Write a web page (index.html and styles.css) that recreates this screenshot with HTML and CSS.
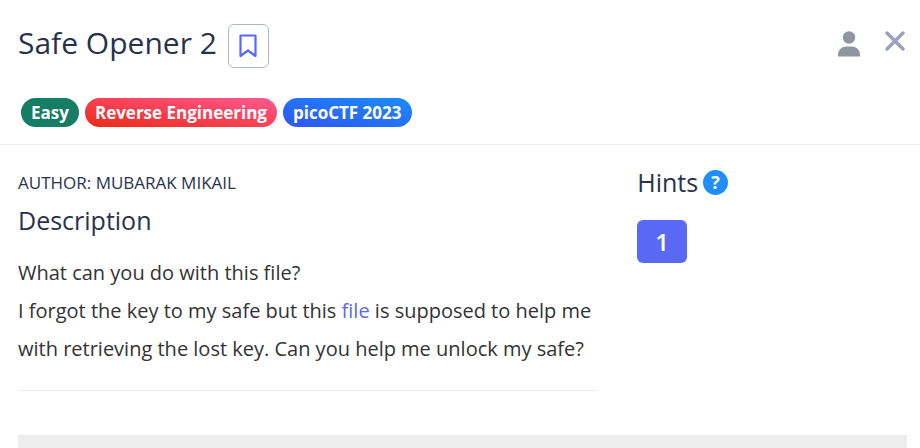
FILE: index.html
```html
<!DOCTYPE html>
<html lang="en">
<head>
  <meta charset="utf-8">
  <title>Safe Opener 2</title>
  <link rel="stylesheet" href="styles.css">
</head>
<body>
  <div class="modal-header">
    <div class="title-row">
      <h1 class="title">Safe Opener 2</h1>
      <button type="button" class="bookmark" aria-label="Bookmark">
        <svg width="18" height="24" viewBox="0 0 18 24">
          <path d="M1.5 1.5h15v20.5l-7.5-5.5-7.5 5.5z" fill="none" stroke="#5a69f5" stroke-width="2.2" stroke-linejoin="round"/>
        </svg>
      </button>
      <div class="actions">
        <button type="button" class="icon-button" aria-label="Profile">
          <svg width="22" height="26" viewBox="0 0 22 26">
            <circle cx="11" cy="6.5" r="6.2" fill="#9094a3"/>
            <path d="M0 25.5v-1.5c0-5.5 4-8.5 8.5-8.5h5c4.5 0 8.5 3 8.5 8.5v1.5z" fill="#9094a3"/>
          </svg>
        </button>
        <button type="button" class="icon-button" aria-label="Close">
          <svg width="20" height="20" viewBox="0 0 20 20">
            <path d="M2 2l16 16M18 2L2 18" fill="none" stroke="#98a1bf" stroke-width="3.4" stroke-linecap="round"/>
          </svg>
        </button>
      </div>
    </div>
    <div class="badges">
      <span class="badge easy">Easy</span>
      <span class="badge category">Reverse Engineering</span>
      <span class="badge event">picoCTF 2023</span>
    </div>
  </div>

  <div class="modal-body">
    <div class="columns">
      <div class="description">
        <p class="author">AUTHOR: MUBARAK MIKAIL</p>
        <h2 class="heading">Description</h2>
        <p class="text">What can you do with this file?</p>
        <p class="text">I forgot the key to my safe but this <a href="#">file</a> is supposed to help me with retrieving the lost key. Can you help me unlock my safe?</p>
      </div>
      <div class="hints">
        <div class="hints-title">
          <h2 class="heading">Hints</h2>
          <button type="button" class="help" aria-label="About hints">?</button>
        </div>
        <button type="button" class="hint">1</button>
      </div>
    </div>
    <div class="panel"></div>
  </div>
</body>
</html>
```

FILE: styles.css
```css
* {
  box-sizing: border-box;
}

body {
  display: flex;
  flex-direction: column;
  min-height: 100vh;
  margin: 0;
  background-color: #fff;
  color: #28324c;
  font-family: "Open Sans", "Noto Sans", sans-serif;
}

h1, h2, p {
  margin: 0;
  font-weight: 400;
}

button {
  padding: 0;
  border: none;
  background: none;
  font-family: inherit;
  cursor: pointer;
}

svg {
  display: block;
}

/* header */
.modal-header {
  padding: 24px 15px 17px 18px;
  border-bottom: 1px solid #ebedf0;
}

.title-row {
  display: flex;
  align-items: center;
  gap: 11px;
}

.title {
  font-size: 30px;
  line-height: 38px;
  padding-bottom: 6px;
}

.bookmark {
  display: flex;
  align-items: center;
  justify-content: center;
  width: 41px;
  height: 44px;
  border: 1px solid #b0b7c1;
  border-radius: 6px;
}

.actions {
  display: flex;
  align-items: flex-start;
  gap: 25px;
  margin-left: auto;
  padding-bottom: 4px;
}

.badges {
  display: flex;
  gap: 6px;
  margin-top: 30px;
  padding-left: 3px;
}

.badge {
  padding: 0 10px;
  border-radius: 15px;
  color: #fff;
  font-size: 17px;
  font-weight: 700;
  line-height: 29px;
}

.easy {
  background-color: #147d64;
}

.category {
  background: linear-gradient(to top right, #ef2917, #ff5a93);
}

.event {
  background: linear-gradient(to top right, #2f55f4, #1b8cfb);
}

/* body */
.modal-body {
  display: flex;
  flex: 1;
  flex-direction: column;
  padding: 23px 13px 0 18px;
}

.columns {
  display: grid;
  grid-template-columns: 15fr 7fr;
  gap: 38px;
  align-items: start;
}

.author {
  font-size: 17px;
  line-height: 30px;
}

.heading {
  font-size: 25px;
  line-height: 28px;
}

.description {
  padding-bottom: 22px;
  border-bottom: 1px solid #ebebeb;
}

.description .heading {
  margin: 8px 0 20px;
}

.text {
  color: #333;
  font-size: 20px;
  line-height: 38px;
}

.text a {
  color: #5a69f5;
  text-decoration: none;
}

.hints {
  padding-left: 1px;
}

.hints-title {
  display: flex;
  align-items: center;
  gap: 5px;
}

.help {
  width: 25px;
  height: 25px;
  border-radius: 50%;
  background-color: #1f8efa;
  color: #fff;
  font-size: 18px;
  font-weight: 700;
  line-height: 25px;
}

.hint {
  width: 50px;
  height: 43px;
  margin-top: 24px;
  border-radius: 6px;
  background-color: #5a69f5;
  color: #fff;
  font-size: 24px;
  font-weight: 600;
}

.panel {
  flex: 1;
  margin-top: 44px;
  background-color: #ededed;
}
```
